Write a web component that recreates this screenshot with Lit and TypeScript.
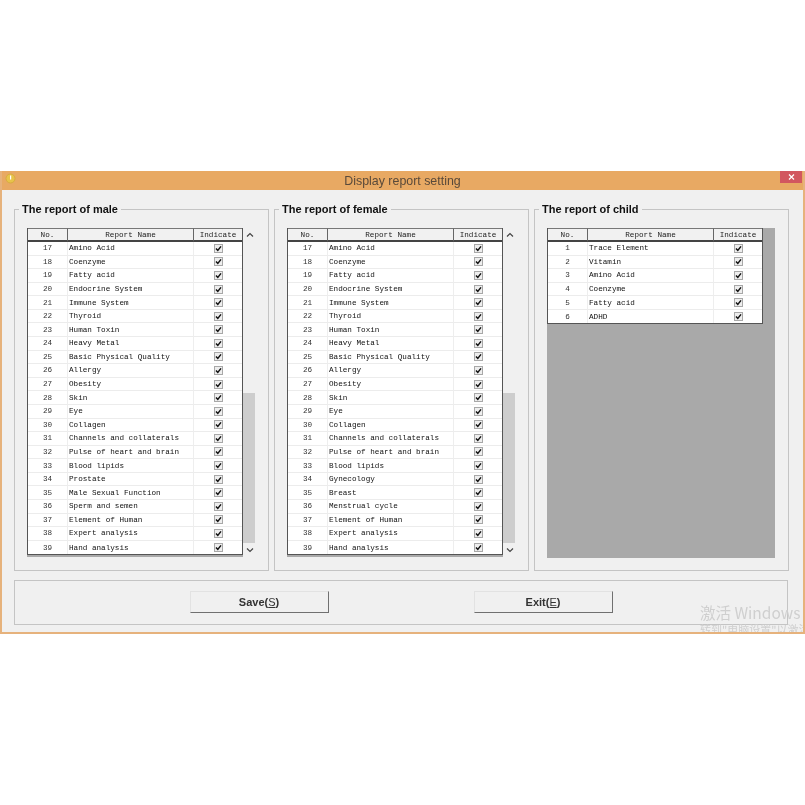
import { LitElement, html, css, svg } from "lit";
import { customElement } from "lit/decorators.js";

type Row = [number, string];
const common: Row[] = [
  [17, "Amino Acid"], [18, "Coenzyme"], [19, "Fatty acid"], [20, "Endocrine System"], [21, "Immune System"],
  [22, "Thyroid"], [23, "Human Toxin"], [24, "Heavy Metal"], [25, "Basic Physical Quality"], [26, "Allergy"],
  [27, "Obesity"], [28, "Skin"], [29, "Eye"], [30, "Collagen"], [31, "Channels and collaterals"],
  [32, "Pulse of heart and brain"], [33, "Blood lipids"],
];
const tail: Row[] = [[37, "Element of Human"], [38, "Expert analysis"], [39, "Hand analysis"]];
const male: Row[] = [...common, [34, "Prostate"], [35, "Male Sexual Function"], [36, "Sperm and semen"], ...tail];
const female: Row[] = [...common, [34, "Gynecology"], [35, "Breast"], [36, "Menstrual cycle"], ...tail];
const child: Row[] = [[1, "Trace Element"], [2, "Vitamin"], [3, "Amino Acid"], [4, "Coenzyme"], [5, "Fatty acid"], [6, "ADHD"]];

const check = svg`<svg class="check" width="9" height="9" viewBox="0 0 9 9"><rect x=".5" y=".5" width="8" height="8" fill="#eee" stroke="#a8a8a8"/><path d="M2 4.4 3.8 6.4 7 2.4" fill="none" stroke="#111" stroke-width="1.5"/></svg>`;

@customElement("app-root")
export class AppRoot extends LitElement {
  static styles = css`
    :host { display: block; width: 805px; height: 805px; background: #fff; overflow: hidden; font-family: "Liberation Sans", Arial, sans-serif; }
    .window { margin-top: 171px; height: 463px; box-sizing: border-box; position: relative; overflow: hidden; background: #f0f0f0; border: solid #e6b27c; border-width: 0 2px 2px; filter: blur(0.4px); }
    .titlebar { height: 19px; background: #e8a963; display: flex; align-items: center; justify-content: center; position: relative; margin: 0 -2px; font-size: 12.4px; color: #5a4a3a; }
    .info { position: absolute; left: 5px; top: 2px; }
    .close { position: absolute; right: 3px; top: 0; width: 22px; height: 12px; background: #d2575f; }
    .close svg { display: block; margin: 3px auto 0; }
    .groups { display: flex; gap: 5px; padding: 13px 0 0 12px; }
    fieldset { margin: 0; flex: none; width: 255px; height: 368px; box-sizing: border-box; border: 1px solid #c4c4c4; padding: 0 12px; min-width: 0; }
    legend { margin-left: -8px; padding: 0 3px; font-size: 11px; font-weight: bold; color: #111; line-height: 13px; }
    .grid { display: flex; width: 229px; height: 329px; margin-top: 12px; align-items: flex-start; }
    .grid.empty { background: #a9a9a9; width: 228px; height: 330px; }
    table { width: 216px; border-collapse: separate; border-spacing: 0; table-layout: fixed; background: #fff; font-family: "Liberation Mono", monospace; font-size: 7.65px; color: #111; box-sizing: border-box; border: solid #555; border-width: 0 1px 1px; }
    th { font-weight: normal; height: 14px; padding: 0; background: #f1f1f1; border-top: 1px solid #777; border-bottom: 2px solid #444; border-right: 1px solid #666; box-sizing: border-box; color: #222; }
    th:last-child { border-right: 0; }
    td { height: 13.59px; padding: 0; box-sizing: border-box; border-bottom: 1px solid #ececec; border-right: 1px solid #eee; line-height: 12px; }
    td:last-child { border-right: 0; }
    .no { text-align: center; color: #333; }
    .name { padding-left: 1px; white-space: nowrap; overflow: hidden; }
    .ind { text-align: center; line-height: 0; }
    .check { vertical-align: middle; }
    tr:last-child td { border-bottom: 0; }
    .stack { width: 216px; height: 329px; flex: none; background: #a9a9a9; }
    .scroll { width: 13px; height: 329px; display: flex; flex-direction: column; background: #f0f0f0; }
    .track { flex: 1; display: flex; flex-direction: column; justify-content: flex-end; padding-right: 1px; }
    .thumb { height: 150px; background: #cdcdcd; }
    .arrow { height: 14px; display: flex; align-items: center; justify-content: center; }
    .bottom { margin: 9px 15px 0 12px; height: 45px; box-sizing: border-box; border: 1px solid #c4c4c4; display: flex; justify-content: center; gap: 145px; padding: 10px 0 0 0; }
    button { width: 139px; height: 22px; box-sizing: border-box; padding: 0; background: #f0f0f0; font: bold 11px "Liberation Sans", Arial, sans-serif; color: #333; border: 1px solid; border-color: #e2e2e2 #707070 #707070 #e2e2e2; }
    u { font-weight: normal; }
    .mark { position: absolute; left: 698px; top: 431px; color: #cfcfcf; font-size: 15.5px; line-height: 20px; white-space: nowrap; font-family: "Noto Sans CJK SC", "Liberation Sans", sans-serif; }
    .mark small { display: block; font-size: 11px; line-height: 14px; }
  `;

  private table(rows: Row[]) {
    return html`<table>
      <colgroup><col style="width:40px" /><col style="width:126px" /><col style="width:48px" /></colgroup>
      <thead><tr><th>No.</th><th>Report Name</th><th>Indicate</th></tr></thead>
      <tbody>${rows.map(([n, name]) => html`<tr><td class="no">${n}</td><td class="name">${name}</td><td class="ind">${check}</td></tr>`)}</tbody>
    </table>`;
  }

  private scrollbar() {
    return html`<div class="scroll">
      <div class="arrow"><svg width="8" height="6" viewBox="0 0 8 6"><path d="M1 4.5 4 1.5 7 4.5" fill="none" stroke="#444" stroke-width="1.2"/></svg></div>
      <div class="track"><div class="thumb"></div></div>
      <div class="arrow"><svg width="8" height="6" viewBox="0 0 8 6"><path d="M1 1.5 4 4.5 7 1.5" fill="none" stroke="#444" stroke-width="1.2"/></svg></div>
    </div>`;
  }

  render() {
    return html`<div class="window">
      <div class="titlebar">
        <svg class="info" width="11" height="11" viewBox="0 0 11 11"><circle cx="5.5" cy="5.5" r="4.5" fill="#e8c34a" stroke="#d8ac40"/><rect x="5" y="2.5" width="1.2" height="4" fill="#fff"/></svg>
        Display report setting
        <div class="close"><svg width="7" height="6" viewBox="0 0 7 6"><path d="M1 .5 6 5.5M6 .5 1 5.5" stroke="#fff" stroke-width="1.2"/></svg></div>
      </div>
      <div class="groups">
        <fieldset><legend>The report of male</legend>
          <div class="grid"><div class="stack">${this.table(male)}</div>${this.scrollbar()}</div>
        </fieldset>
        <fieldset><legend>The report of female</legend>
          <div class="grid"><div class="stack">${this.table(female)}</div>${this.scrollbar()}</div>
        </fieldset>
        <fieldset><legend>The report of child</legend>
          <div class="grid empty"><div class="stack">${this.table(child)}</div></div>
        </fieldset>
      </div>
      <div class="bottom">
        <button>Save(<u>S</u>)</button>
        <button>Exit(<u>E</u>)</button>
      </div>
      <div class="mark">激活 Windows<small>转到"电脑设置"以激活</small></div>
    </div>`;
  }
}
